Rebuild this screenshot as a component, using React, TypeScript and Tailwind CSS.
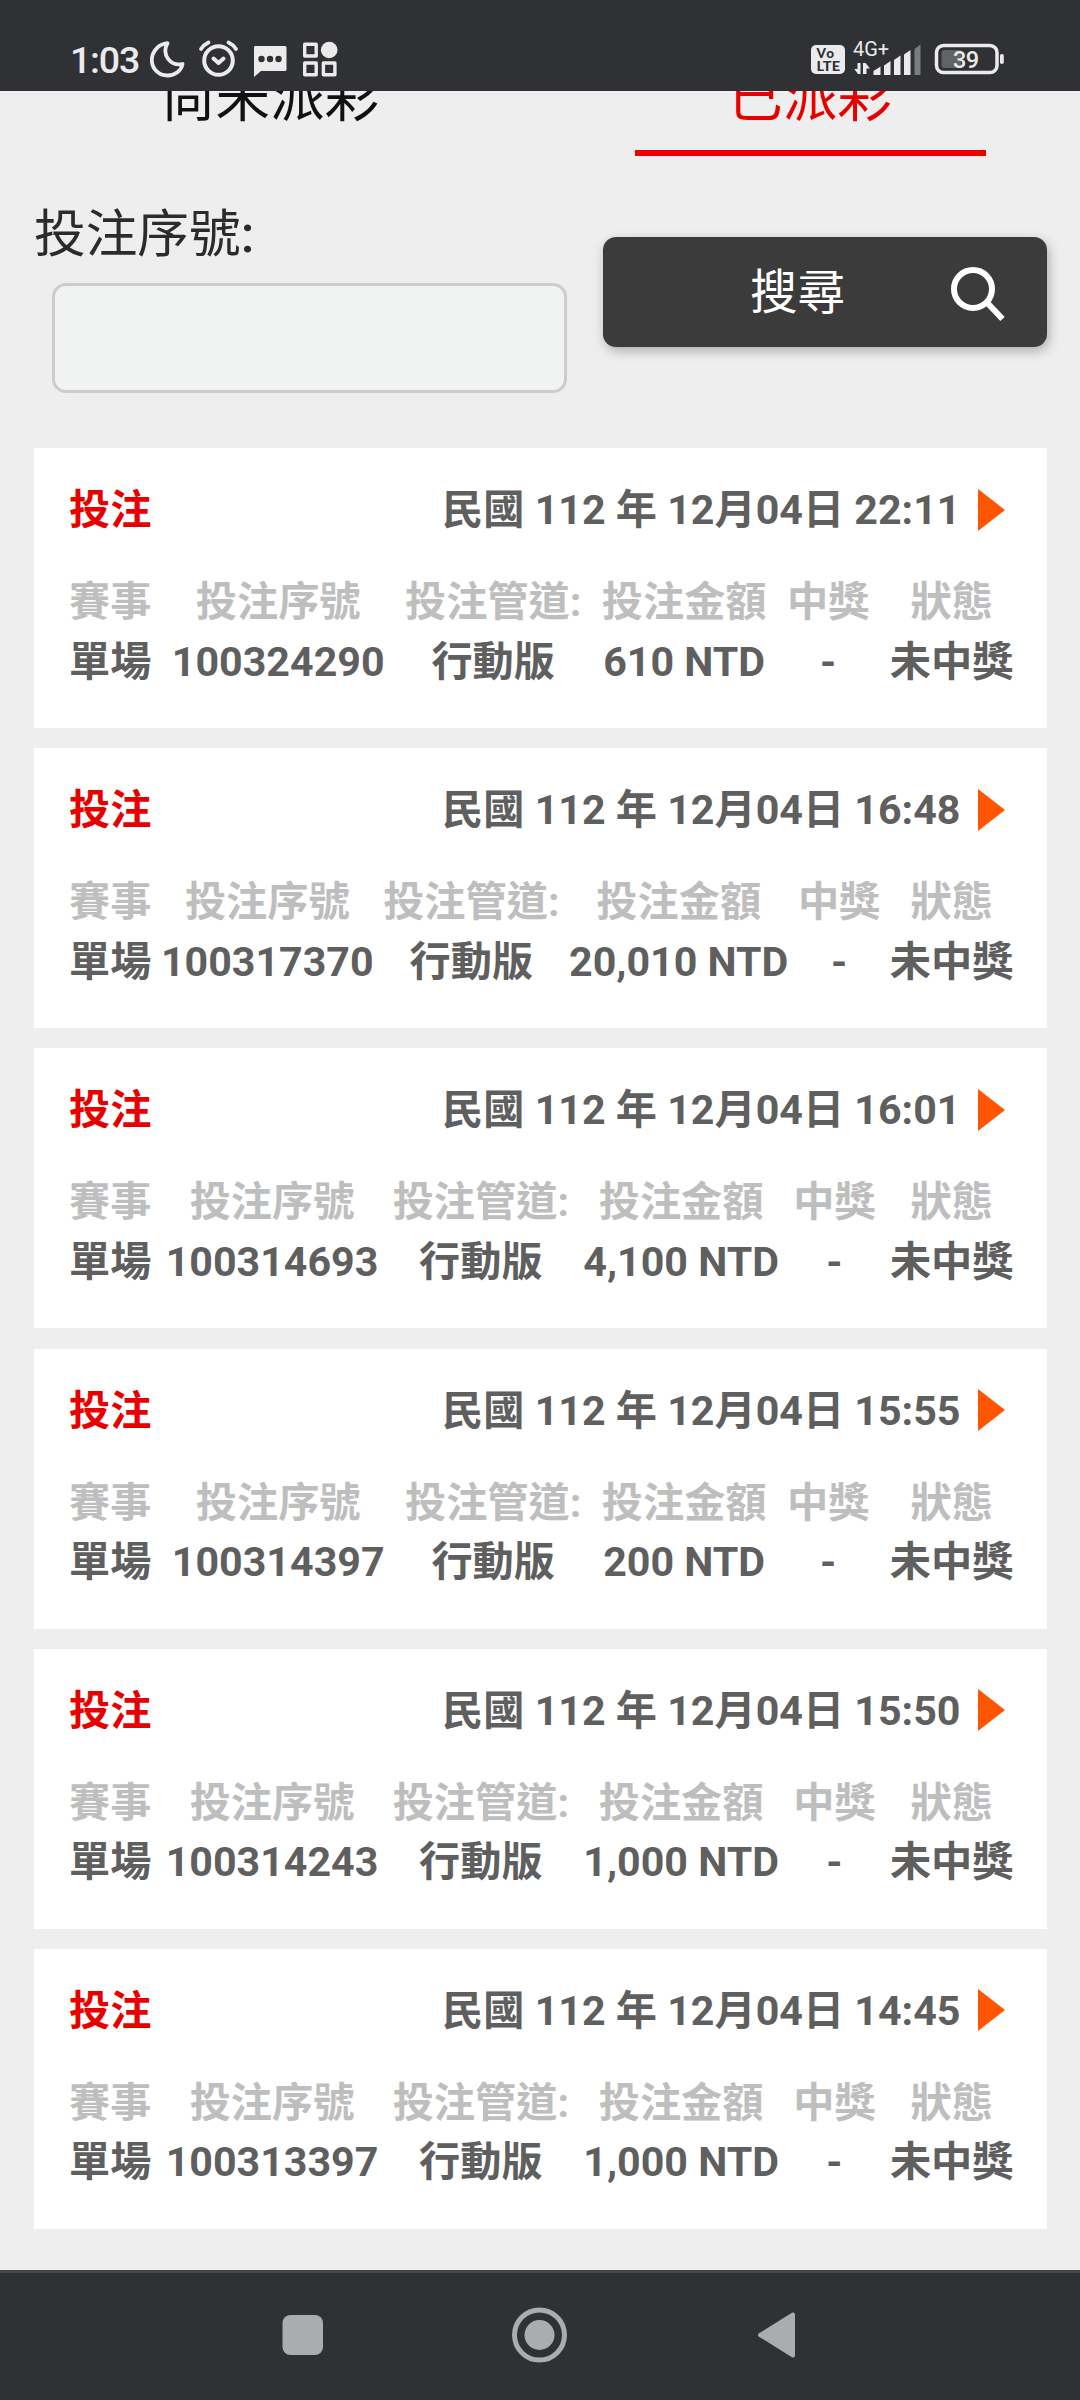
const bets = [
  { id: "100324290", amount: "610 NTD", time: "22:11" },
  { id: "100317370", amount: "20,010 NTD", time: "16:48" },
  { id: "100314693", amount: "4,100 NTD", time: "16:01" },
  { id: "100314397", amount: "200 NTD", time: "15:55" },
  { id: "100314243", amount: "1,000 NTD", time: "15:50" },
  { id: "100313397", amount: "1,000 NTD", time: "14:45" },
];

function StatusBar() {
  return (
    <header className="relative z-10 flex h-[91px] shrink-0 items-start bg-[#303135] text-[#ebebeb]">
      <span className="ml-[70px] mt-[38px] w-[80px] text-[37.500px] leading-[44px] font-medium tracking-[-1.200px]">1:03</span>
      <svg className="mt-[36px]" width="200" height="46" viewBox="150 36 200 46" fill="none" stroke="#ebebeb">
        <path d="M167.500 43.200C158 44 151.800 52 151.800 60C151.800 69 159 75.500 167.500 75.500C175 75.500 181.500 70.500 182.500 64C171 66.500 161 55.500 167.500 43.200Z" strokeWidth="3.800" strokeLinejoin="round" />
        <circle cx="218.500" cy="60.500" r="14.300" strokeWidth="4" />
        <path d="M213.500 58.500L218.500 63L223.500 58.500" strokeWidth="4" strokeLinecap="round" strokeLinejoin="round" />
        <path d="M201 49Q204 44.500 208.500 42.500M236 49Q233 44.500 228.500 42.500" strokeWidth="3.800" strokeLinecap="round" />
        <path d="M255 46H285Q286.500 46 286.500 47.500V69.500Q286.500 71 285 71H261L254 77V47.500Q254 46 255 46Z" fill="#ebebeb" stroke="none" />
        <g fill="#303135" stroke="none">
          <circle cx="261.500" cy="59" r="3.200" />
          <circle cx="270" cy="59" r="3.200" />
          <circle cx="278.500" cy="59" r="3.200" />
        </g>
        <g strokeWidth="3.400" strokeLinejoin="round">
          <rect x="304.700" y="44.200" width="11.500" height="11.800" />
          <rect x="304.700" y="63" width="11.500" height="11.800" />
          <rect x="323.400" y="63" width="11.500" height="11.800" />
        </g>
        <circle cx="329.200" cy="50" r="8.300" fill="#ebebeb" stroke="none" />
      </svg>
      <div className="ml-auto mr-[60px] mt-[36px] flex">
        <svg width="220" height="46" viewBox="800 36 220 46" fill="#ebebeb" fontFamily="Roboto">
          <rect x="811" y="45" width="34" height="29" rx="5" />
          <g fill="#303135" fontFamily="Lato" fontWeight="900" fontSize="13.500">
            <text x="816.500" y="58" textLength="17.500">Vo</text>
            <text x="816.500" y="70.500" textLength="23.500" lengthAdjust="spacingAndGlyphs">LTE</text>
          </g>
          <text x="853" y="56" fontSize="20" textLength="36">4G+</text>
          <path d="M857.500 63H860.500V74H858L854.300 69H857.500ZM863 63H865.500L870 68.500H866.500V74H863Z" />
          <path d="M873.500 75V71L880.500 66.500V75Z" />
          <path d="M884 75V65.500L890.500 61V75Z" />
          <path d="M894 75V60L900.500 55.500V75Z" />
          <path d="M904 75V54.500L910.500 50V75Z" />
          <path d="M914.500 75V49L920.500 44.500V75Z" fill="#7b7c7f" />
          <rect x="936.500" y="45.500" width="60.500" height="27" rx="7" fill="none" stroke="#ebebeb" strokeWidth="3.500" />
          <path d="M944.500 50H961V68H944.500Q941.500 68 941.500 65V53Q941.500 50 944.500 50Z" fill="#626366" />
          <rect x="1000" y="54" width="3.800" height="10" rx="1.800" />
          <text x="953" y="67.500" fontSize="23.500" fontWeight="500" textLength="26">39</text>
        </svg>
      </div>
    </header>
  );
}

function Tabs() {
  return (
    <nav className="grid h-[65px] shrink-0 grid-cols-2 justify-items-center text-[54.500px] leading-[60px] text-[#111]">
      <div className="-mt-[24px] h-[89px] w-[351px] text-center">尚未派彩</div>
      <div className="-mt-[24px] h-[89px] w-[351px] border-b-6 border-[#ee0000] text-center text-[#e80000]">已派彩</div>
    </nav>
  );
}

function SearchForm() {
  return (
    <section className="flex h-[292px] shrink-0 items-start pl-[34px]">
      <div className="w-[569px] pt-[49px]">
        <label htmlFor="bet" className="block h-[78px] text-[51.700px] leading-[60px] text-[#2b2b2b]">投注序號<span className="font-medium">:</span></label>
        <input id="bet" className="ml-[18px] block h-[110px] w-[515px] rounded-[14px] border-3 border-[#ccc] bg-[#f0f3f1] outline-none" />
      </div>
      <button className="mt-[81px] flex h-[110px] w-[444px] items-center rounded-[13px] bg-[#3b3b3b] pl-[147px] text-[47.500px] leading-[60px] text-white shadow-[2px_4px_12px_rgba(0,0,0,0.28)]">
        <span className="mt-[2px]">搜尋</span>
        <svg className="ml-[104px]" width="60" height="60" viewBox="0 0 60 60" fill="none" stroke="white" strokeWidth="6">
          <circle cx="24" cy="27" r="19" />
          <path d="M37.500 40L53.500 57" />
        </svg>
      </button>
    </section>
  );
}

function BetCard({ bet }: { bet: (typeof bets)[number] }) {
  const columns = [
    ["賽事", "單場"],
    ["投注序號", bet.id],
    ["投注管道:", "行動版"],
    ["投注金額", bet.amount],
    ["中獎", "-"],
    ["狀態", "未中獎"],
  ];
  return (
    <article className="h-[280px] bg-white pt-[32px] pr-[33.500px] pl-[35px] text-[41.200px] font-bold text-[#5f5f5f]">
      <div className="flex h-[60px] items-center pr-[8.500px] leading-[60px]">
        <span className="text-[#e80000]">投注</span>
        <span className="ml-auto">民國 112 年 12月04日 {bet.time}</span>
        <svg className="-mt-[1px] ml-[17.500px]" width="27" height="42" viewBox="0 0 27 42" fill="#ff5400">
          <path d="M0 0L27 21L0 42Z" />
        </svg>
      </div>
      <div className="mt-[33px] flex justify-between text-center leading-[59.500px] whitespace-nowrap">
        {columns.map(([head, value]) => (
          <div key={head}>
            <div className="text-[#bebebe]">{head}</div>
            <div>{value}</div>
          </div>
        ))}
      </div>
    </article>
  );
}

function NavBar() {
  return (
    <footer className="h-[130px] shrink-0 border-t-3 border-[#42474a] bg-[#303135]">
      <svg width="1080" height="127" viewBox="0 2273 1080 127" fill="#abacae">
        <rect x="282.500" y="2315" width="40.500" height="40" rx="8" />
        <circle cx="539.500" cy="2335" r="25" fill="none" stroke="#abacae" strokeWidth="5" />
        <circle cx="539.500" cy="2335" r="15" />
        <path d="M760 2335L793 2314.500V2355.500Z" stroke="#abacae" strokeWidth="4" strokeLinejoin="round" />
      </svg>
    </footer>
  );
}

export default function App() {
  return (
    <div className="flex h-[2400px] w-[1080px] flex-col overflow-hidden bg-[#eee] font-['Roboto','Noto_Sans_CJK_TC',sans-serif]">
      <StatusBar />
      <Tabs />
      <SearchForm />
      <main className="flex flex-1 flex-col gap-[20.200px] pr-[33px] pl-[34px]">
        {bets.map((bet) => (
          <BetCard key={bet.id} bet={bet} />
        ))}
      </main>
      <NavBar />
    </div>
  );
}
